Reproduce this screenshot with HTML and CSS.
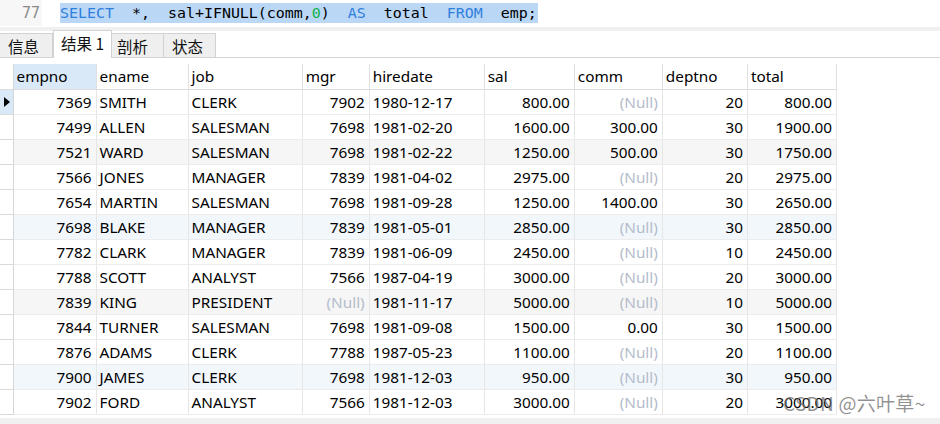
FILE: index.html
```html
<!DOCTYPE html>
<html>
<head>
<meta charset="utf-8">
<link rel="stylesheet" href="styles.css">
</head>
<body>
<div class="editor">
  <div class="gutter">77</div>
  <div class="code"><span class="sel"><span class="kw">SELECT</span>  *,  sal+IFNULL(comm,<span class="num">0</span>)  <span class="kw">AS</span>  total  <span class="kw">FROM</span>  emp;</span></div>
</div>
<div class="band"></div>
<div class="tabs">
  <div class="tab t1">信息</div>
  <div class="tab active t2">结果 1</div>
  <div class="tab t3">剖析</div>
  <div class="tab t4">状态</div>
</div>
<div class="grid-wrap">
<table class="grid">
  <colgroup>
    <col class="c0"><col class="c1"><col class="c2"><col class="c3"><col class="c4"><col class="c5"><col class="c6"><col class="c7"><col class="c8"><col class="c9">
  </colgroup>
  <thead>
    <tr><th class="ind"></th><th class="hsel">empno</th><th>ename</th><th>job</th><th>mgr</th><th>hiredate</th><th>sal</th><th>comm</th><th>deptno</th><th>total</th></tr>
  </thead>
  <tbody>
    <tr><td class="ind cur"><span class="arrow"></span></td><td class="r">7369</td><td>SMITH</td><td>CLERK</td><td class="r">7902</td><td>1980-12-17</td><td class="r">800.00</td><td class="r null">(Null)</td><td class="r">20</td><td class="r">800.00</td></tr>
    <tr><td class="ind"></td><td class="r">7499</td><td>ALLEN</td><td>SALESMAN</td><td class="r">7698</td><td>1981-02-20</td><td class="r">1600.00</td><td class="r">300.00</td><td class="r">30</td><td class="r">1900.00</td></tr>
    <tr class="gray"><td class="ind"></td><td class="r">7521</td><td>WARD</td><td>SALESMAN</td><td class="r">7698</td><td>1981-02-22</td><td class="r">1250.00</td><td class="r">500.00</td><td class="r">30</td><td class="r">1750.00</td></tr>
    <tr><td class="ind"></td><td class="r">7566</td><td>JONES</td><td>MANAGER</td><td class="r">7839</td><td>1981-04-02</td><td class="r">2975.00</td><td class="r null">(Null)</td><td class="r">20</td><td class="r">2975.00</td></tr>
    <tr><td class="ind"></td><td class="r">7654</td><td>MARTIN</td><td>SALESMAN</td><td class="r">7698</td><td>1981-09-28</td><td class="r">1250.00</td><td class="r">1400.00</td><td class="r">30</td><td class="r">2650.00</td></tr>
    <tr class="blue"><td class="ind"></td><td class="r">7698</td><td>BLAKE</td><td>MANAGER</td><td class="r">7839</td><td>1981-05-01</td><td class="r">2850.00</td><td class="r null">(Null)</td><td class="r">30</td><td class="r">2850.00</td></tr>
    <tr><td class="ind"></td><td class="r">7782</td><td>CLARK</td><td>MANAGER</td><td class="r">7839</td><td>1981-06-09</td><td class="r">2450.00</td><td class="r null">(Null)</td><td class="r">10</td><td class="r">2450.00</td></tr>
    <tr><td class="ind"></td><td class="r">7788</td><td>SCOTT</td><td>ANALYST</td><td class="r">7566</td><td>1987-04-19</td><td class="r">3000.00</td><td class="r null">(Null)</td><td class="r">20</td><td class="r">3000.00</td></tr>
    <tr class="gray"><td class="ind"></td><td class="r">7839</td><td>KING</td><td>PRESIDENT</td><td class="r null">(Null)</td><td>1981-11-17</td><td class="r">5000.00</td><td class="r null">(Null)</td><td class="r">10</td><td class="r">5000.00</td></tr>
    <tr><td class="ind"></td><td class="r">7844</td><td>TURNER</td><td>SALESMAN</td><td class="r">7698</td><td>1981-09-08</td><td class="r">1500.00</td><td class="r">0.00</td><td class="r">30</td><td class="r">1500.00</td></tr>
    <tr><td class="ind"></td><td class="r">7876</td><td>ADAMS</td><td>CLERK</td><td class="r">7788</td><td>1987-05-23</td><td class="r">1100.00</td><td class="r null">(Null)</td><td class="r">20</td><td class="r">1100.00</td></tr>
    <tr class="blue"><td class="ind"></td><td class="r">7900</td><td>JAMES</td><td>CLERK</td><td class="r">7698</td><td>1981-12-03</td><td class="r">950.00</td><td class="r null">(Null)</td><td class="r">30</td><td class="r">950.00</td></tr>
    <tr><td class="ind"></td><td class="r">7902</td><td>FORD</td><td>ANALYST</td><td class="r">7566</td><td>1981-12-03</td><td class="r">3000.00</td><td class="r null">(Null)</td><td class="r">20</td><td class="r">3000.00</td></tr>
  </tbody>
</table>
<div class="watermark">CSDN @六叶草~</div>
</div>
<div class="scroll"></div>
</body>
</html>
```

FILE: styles.css
```css
html, body {
  margin: 0;
  padding: 0;
  background: #ffffff;
  width: 940px;
  height: 424px;
  overflow: hidden;
}
body {
  font-family: "Noto Sans", "Noto Sans CJK SC", sans-serif;
  font-size: 15.3px;
  color: #000;
  position: relative;
}
.editor {
  display: flex;
  height: 27px;
  background: #fff;
}
.gutter {
  width: 42px;
  height: 26px;
  background: #f7f7f7;
  color: #8a8a8a;
  font-family: "DejaVu Sans Mono", monospace;
  font-size: 15px;
  line-height: 26px;
  text-align: right;
  padding-right: 2px;
  box-sizing: border-box;
}
.code {
  padding-left: 18px;
  padding-top: 3px;
  font-family: "DejaVu Sans Mono", monospace;
  font-size: 14.95px;
  line-height: 20px;
  white-space: pre;
  color: #000;
}
.sel {
  display: inline-block;
  background: #bad7f6;
  height: 20px;
  padding-right: 1px;
}
.kw { color: #2f7fdc; }
.num { color: #10b24a; }
.band {
  height: 4px;
  background: #f0f0f0;
}
.tabs {
  display: flex;
  align-items: flex-end;
  height: 26px;
  border-bottom: 1px solid #d4d4d4;
  font-family: "Noto Sans CJK SC", sans-serif;
  font-size: 15.5px;
}
.tab {
  height: 24px;
  line-height: 24px;
  background: #efefef;
  border: 1px solid #d2d2d2;
  border-bottom: none;
  box-sizing: border-box;
  padding-left: 8px;
  color: #111;
}
.t1 { width: 53px; border-left: none; }
.t2 { width: 59px; }
.t3 { width: 52px; border-left: none; padding-left: 5px; }
.t4 { width: 52px; border-left: none; }
.tab.active {
  line-height: 25px;
  background: #fff;
  margin-bottom: -1px;
  height: 28px;
  padding-left: 7px;
}
.grid-wrap {
  position: relative;
  padding-top: 6px;
  height: 356px;
}
.grid {
  border-collapse: collapse;
  table-layout: fixed;
  width: 837px;
}
.c0 { width: 13px; }
.c1 { width: 83px; }
.c2 { width: 92px; }
.c3 { width: 114px; }
.c4 { width: 67px; }
.c5 { width: 115px; }
.c6 { width: 90px; }
.c7 { width: 88px; }
.c8 { width: 85px; }
.c9 { width: 89px; }
.grid th, .grid td {
  height: 25px;
  padding: 0 4px 0 3px;
  box-sizing: border-box;
  white-space: nowrap;
  overflow: hidden;
  border-right: 1px solid #e6e6e6;
  border-bottom: 1px solid #ececec;
  line-height: 24px;
}
.grid th {
  font-weight: normal;
  text-align: left;
  border-bottom: 1px solid #dcdcdc;
  border-right: 1px solid #e0e0e0;
}
.grid th.hsel {
  background: #d9e9f7;
}
.grid .ind {
  padding: 0;
  border-right: 1px solid #d6d6d6;
  border-bottom: 1px solid #dadada;
  background: #fff;
}
.grid th.ind { border-bottom: 1px solid #dcdcdc; }
.grid td.cur { background: #d9e9f7; }
.arrow {
  display: block;
  width: 0;
  height: 0;
  margin-left: 4px;
  border-top: 5px solid transparent;
  border-bottom: 5px solid transparent;
  border-left: 6px solid #000;
}
.r { text-align: right; }
.null { color: #b4bccb; }
tr.gray td { background: #f6f6f6; }
tr.blue td { background: #f2f7fc; }
tr.gray td.ind, tr.blue td.ind { background: #fff; }
.watermark {
  position: absolute;
  left: 783px;
  top: 331px;
  font-family: "Noto Sans CJK SC", sans-serif;
  font-size: 19px;
  color: rgba(110, 110, 110, 0.75);
  white-space: nowrap;
  letter-spacing: 0.3px;
}
.scroll {
  position: absolute;
  left: 0;
  top: 418px;
  width: 940px;
  height: 6px;
  background: #f0f0f0;
}
```
